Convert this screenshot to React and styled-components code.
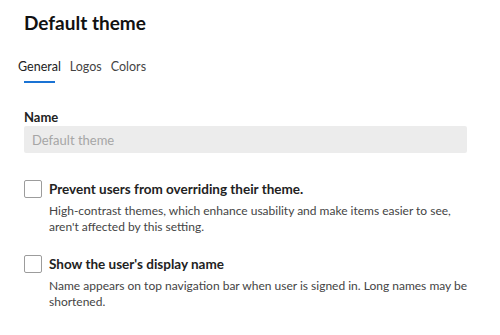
import React from "react";
import styled, { createGlobalStyle } from "styled-components";

const GlobalStyle = createGlobalStyle`
*{
  margin: 0;
  padding: 0;
  box-sizing: border-box;
}
body{
  background: #ffffff;
  font-family: Lato, "Open Sans", sans-serif;
  color: #222;
}
`

const Page = styled.div`
width: 500px;
height: 335px;
overflow: hidden;
padding: 10px 24px 0 24px;
`

const Title = styled.h1`
font-size: 19px;
font-weight: 700;
color: #111;
line-height: 26px;
`

const Tabs = styled.div`
display: flex;
gap: 1px;
margin-top: 22px;
margin-left: -10px;
`

const Tab = styled.button`
background: none;
border: none;
font-family: inherit;
font-size: 12.5px;
color: ${(p) => (p.$active ? "#222" : "#444")};
line-height: 18px;
padding: 0 4px 7px;
position: relative;
cursor: pointer;
&::after{
  content: "";
  display: ${(p) => (p.$active ? "block" : "none")};
  position: absolute;
  left: 10px;
  right: 10px;
  bottom: 0;
  height: 2px;
  background: #1a73d4;
}
`

const Field = styled.div`
margin-top: 25px;
`

const Label = styled.label`
display: block;
font-size: 13px;
font-weight: 700;
color: #222;
line-height: 18px;
margin-bottom: 0;
`

const Input = styled.input`
width: 443px;
height: 27px;
border: none;
border-radius: 2px;
background: #ececec;
font-family: inherit;
font-size: 13px;
padding: 0 8px;
color: #a6a6a6;
&::placeholder{
  color: #a6a6a6;
}
`

const Option = styled.div`
display: flex;
gap: 7px;
margin-top: ${(p) => p.$top}px;
`

const Box = styled.input.attrs({ type: "checkbox" })`
appearance: none;
width: 18px;
height: 18px;
border: 1px solid #9c9c9c;
border-radius: 2px;
background: #fff;
flex: none;
margin-top: 0;
`

const Texts = styled.div`
display: flex;
flex-direction: column;
`

const OptionTitle = styled.span`
font-size: 13.5px;
font-weight: 700;
color: #222;
line-height: 18px;
`

const Description = styled.p`
font-size: 12px;
color: #444;
line-height: 16px;
margin-top: 5px;
width: 425px;
`

export default function App() {
  return (
    <Page>
      <GlobalStyle />
      <Title>Default theme</Title>
      <Tabs>
        <Tab $active>General</Tab>
        <Tab>Logos</Tab>
        <Tab>Colors</Tab>
      </Tabs>
      <Field>
        <Label>Name</Label>
        <Input placeholder="Default theme" readOnly />
      </Field>
      <Option $top={27}>
        <Box />
        <Texts>
          <OptionTitle>Prevent users from overriding their theme.</OptionTitle>
          <Description>
            High-contrast themes, which enhance usability and make items easier to see, aren't affected by this setting.
          </Description>
        </Texts>
      </Option>
      <Option $top={20}>
        <Box />
        <Texts>
          <OptionTitle>Show the user's display name</OptionTitle>
          <Description>
            Name appears on top navigation bar when user is signed in. Long names may be shortened.
          </Description>
        </Texts>
      </Option>
    </Page>
  );
}
